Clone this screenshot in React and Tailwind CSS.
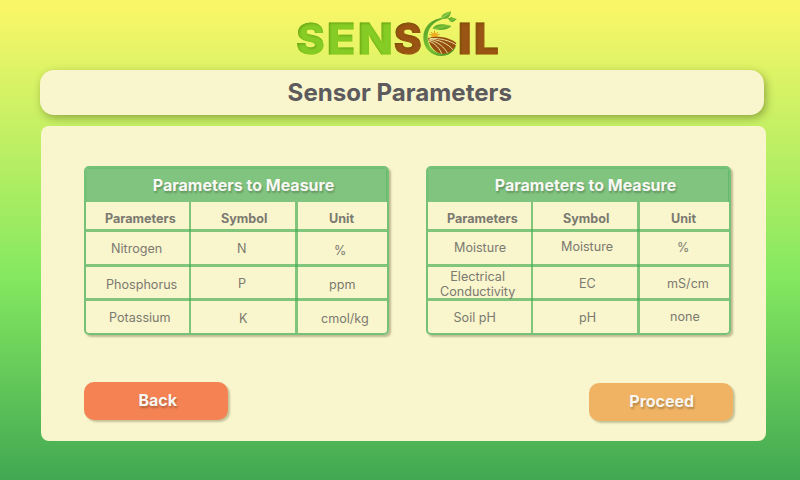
import React from "react";

const LETTERS = [
  { ch: "S", x: 296.3, w: 28.3, fill: "#86cc25" },
  { ch: "E", x: 326.8, w: 28.5, fill: "#86cc25" },
  { ch: "N", x: 357.8, w: 35, fill: "#86cc25" },
  { ch: "S", x: 393.7, w: 28, fill: "#9a5418" },
  { ch: "I", x: 457.5, w: 14.5, fill: "#9a5418" },
  { ch: "L", x: 473.7, w: 25, fill: "#9a5418" },
];

function Logo() {
  return (
    <svg className="block h-[60px] w-[220px]" viewBox="290 5 220 60" role="img" aria-label="SENSOIL">
      <defs>
        <filter id="inset" x="-10%" y="-10%" width="120%" height="120%">
          <feOffset in="SourceAlpha" dx="0.6" dy="1.2" result="off" />
          <feGaussianBlur in="off" stdDeviation="0.9" result="blur" />
          <feComposite in="SourceAlpha" in2="blur" operator="out" result="edge" />
          <feFlood floodColor="#1d4a05" floodOpacity="0.5" />
          <feComposite in2="edge" operator="in" result="shade" />
          <feMerge>
            <feMergeNode in="SourceGraphic" />
            <feMergeNode in="shade" />
          </feMerge>
        </filter>
        <linearGradient id="leaf" x1="0" y1="0" x2="1" y2="1">
          <stop offset="0" stopColor="#4c9a25" />
          <stop offset="0.5" stopColor="#7cc236" />
          <stop offset="1" stopColor="#3f8a22" />
        </linearGradient>
        <clipPath id="field">
          <path d="M428 38C437 35.5 449 37 456.3 43C455.5 49 450 53.5 443 54C436 53.5 430 48 428 38Z" />
        </clipPath>
      </defs>
      <g filter="url(#inset)" className="font-['Inter',sans-serif] text-[42px] font-extrabold">
        {LETTERS.map((l, i) => (
          <text
            key={i}
            x={l.x}
            y="53.6"
            textLength={l.w}
            lengthAdjust="spacingAndGlyphs"
            fill={l.fill}
            stroke={l.fill}
            strokeWidth="1"
          >
            {l.ch}
          </text>
        ))}
      </g>
      <path d="M445 18.2C431 18 423.3 27 423.3 37.5C423.3 48 431 56 441.5 56C448 56 454 52.5 456.3 45C452.5 51 448 54 442.5 53.7C433.5 53 427.8 46.5 427.6 37.5C427.4 29 432.5 21.5 445 18.2Z" fill="url(#leaf)" />
      <path d="M432 23C436 18.8 441 18.8 445.5 18C448 17.4 450 18.7 452 19.7" fill="none" stroke="#4f9c28" strokeWidth="1" />
      <path d="M440.8 18.8C441.5 13.8 445.5 12.6 451 11.2C451 16.5 447.5 19 440.8 18.8Z" fill="url(#leaf)" />
      <path d="M448.5 19.4C450.5 17 451 17.5 451.6 16.8C452 17.8 453.5 18 456.8 19C454.5 20.8 453.5 23 450.5 21.8Z" fill="url(#leaf)" />
      <path d="M432.5 28.6C435 23.5 443 23.2 451.5 26C447.5 30.3 438.5 30.8 432.5 28.6Z" fill="url(#leaf)" />
      <path d="M442 18L449 12.8" stroke="#c2e486" strokeWidth="0.5" fill="none" />
      <path d="M434.5 36V30.5M434.5 36L431 32M434.5 36L438 32M434.5 36L429.3 34.2M434.5 36L439.8 34.2" stroke="#dba02a" strokeWidth="1" />
      <circle cx="434.5" cy="35.6" r="3.2" fill="#efad22" />
      <g clipPath="url(#field)">
        <rect x="426" y="34" width="32" height="22" fill="#95500f" />
        <g fill="none" stroke="#f4eaaa" strokeWidth="0.9">
          <path d="M430 38.5C440 38 450 40.5 457 45.5" />
          <path d="M429 39C438 39.5 448 43 454 51" />
          <path d="M429 39.8C437 41.5 444 46 448.5 55" />
          <path d="M429 41C435 43.5 440 48 442.5 56" />
        </g>
      </g>
    </svg>
  );
}

const HEADINGS = [
  { t: "Parameters", c: "pl-[19px] pt-[9px]" },
  { t: "Symbol", c: "pl-[30px] pt-[9px]" },
  { t: "Unit", c: "pl-[31px] pt-[9px]" },
];

const LEFT = [
  [
    { t: "Nitrogen", c: "pl-[25px] pt-[9px]" },
    { t: "N", c: "pl-[46px] pt-[9px]" },
    { t: "%", c: "pl-[36px] pt-[11px]" },
  ],
  [
    { t: "Phosphorus", c: "pl-[20px] pt-[10px]" },
    { t: "P", c: "pl-[47px] pt-[9px]" },
    { t: "ppm", c: "pl-[31px] pt-[10px]" },
  ],
  [
    { t: "Potassium", c: "pl-[23px] pt-[9px]" },
    { t: "K", c: "pl-[48px] pt-[10px]" },
    { t: "cmol/kg", c: "pl-[23px] pt-[10px]" },
  ],
];

const RIGHT = [
  [
    { t: "Moisture", c: "pl-[26px] pt-[8px]" },
    { t: "Moisture", c: "pl-[28px] pt-[7px]" },
    { t: "%", c: "pl-[37px] pt-[8px]" },
  ],
  [
    { t: "Electrical\nConductivity", c: "pl-[12px] pt-[2px]" },
    { t: "EC", c: "pl-[46px] pt-[9px]" },
    { t: "mS/cm", c: "pl-[27px] pt-[9px]" },
  ],
  [
    { t: "Soil pH", c: "pl-[25.5px] pt-[9px]" },
    { t: "pH", c: "pl-[46px] pt-[9px]" },
    { t: "none", c: "pl-[30px] pt-[8px]" },
  ],
];

const ROW_HEIGHTS = ["h-[35px]", "h-[34px]", "h-[32px]"];
const COLUMN_RULES = ["border-r-2", "border-r-[3px]", ""];

// Cells reach down over the row rule, so the translucent rules darken where they cross.
function Row({ cells, className, last }) {
  return (
    <div
      className={
        "grid grid-cols-[105px_107px_89px] " +
        (last ? "" : "border-b-[3px] border-[#43ab52a8] ") +
        className
      }
    >
      {cells.map((cell, i) => (
        <div
          key={i}
          className={
            "flex items-start whitespace-pre border-[#43ab52a8] text-center leading-[15px] " +
            (last ? "" : "-mb-[3px] ") +
            COLUMN_RULES[i] +
            " " +
            cell.c
          }
        >
          {cell.t}
        </div>
      ))}
    </div>
  );
}

function ParameterTable({ rows }) {
  return (
    <section className="h-[169px] w-[305px] overflow-hidden rounded-[5px] border-2 border-[#76c178] text-[12.6px] text-[#7b7a70] shadow-[2px_2px_2px_rgba(90,80,40,0.35)]">
      <h2 className="flex h-[34px] justify-center bg-[#81c47f] pl-[14px] pt-[7px] text-[16px] font-bold leading-[20px] text-[#f8f8f4] shadow-[inset_0_1px_0_#6fbd74,inset_1px_0_0_#76c178,inset_-1px_0_0_#66b96d] [text-shadow:1px_2px_2px_rgba(0,0,0,0.25)]">
        Parameters to Measure
      </h2>
      <Row cells={HEADINGS} className="h-[30px] font-bold" />
      {rows.map((r, i) => (
        <Row key={i} cells={r} className={ROW_HEIGHTS[i]} last={i === 2} />
      ))}
    </section>
  );
}

export default function App() {
  return (
    <main className="flex h-[480px] w-[800px] flex-col overflow-hidden bg-[linear-gradient(180deg,#fcf768_0%,#84e860_58%,#42a852_100%)] font-['Inter',sans-serif]">
      <header className="flex h-[70px] shrink-0 pl-[290px] pt-[5px]">
        <Logo />
      </header>
      <div className="ml-[39.5px] flex h-[45px] w-[724.5px] shrink-0 items-center justify-center rounded-[14px] bg-[#f9f5cd] pr-[4px] shadow-[2px_3px_8px_rgba(70,80,20,0.45)]">
        <h1 className="text-[24.1px] font-bold leading-[30px] text-[#5c5a5c]">Sensor Parameters</h1>
      </div>
      <div className="ml-[41px] mt-[11px] flex h-[314.5px] w-[724.5px] shrink-0 flex-col rounded-[8px] bg-[#f9f5cd] pl-[43px] pt-[40px]">
        <div className="flex gap-[37px]">
          <ParameterTable rows={LEFT} />
          <ParameterTable rows={RIGHT} />
        </div>
        <div className="mt-[47px] flex gap-[361.5px]">
          <button className="h-[38px] w-[143.5px] rounded-[10px] bg-[#f48253] pb-[2px] pl-[4px] text-[16px] font-bold text-[#f8f6f0] shadow-[2px_2px_2px_rgba(80,80,40,0.3)] [text-shadow:1px_2px_2px_rgba(0,0,0,0.25)]">
            Back
          </button>
          <button className="mt-px h-[38px] w-[143.5px] rounded-[10px] bg-[#efb363] pb-[2px] pl-[2px] text-[16px] font-bold text-[#f8f6f0] shadow-[2px_2px_2px_rgba(80,80,40,0.3)] [text-shadow:1px_2px_2px_rgba(0,0,0,0.25)]">
            Proceed
          </button>
        </div>
      </div>
    </main>
  );
}
